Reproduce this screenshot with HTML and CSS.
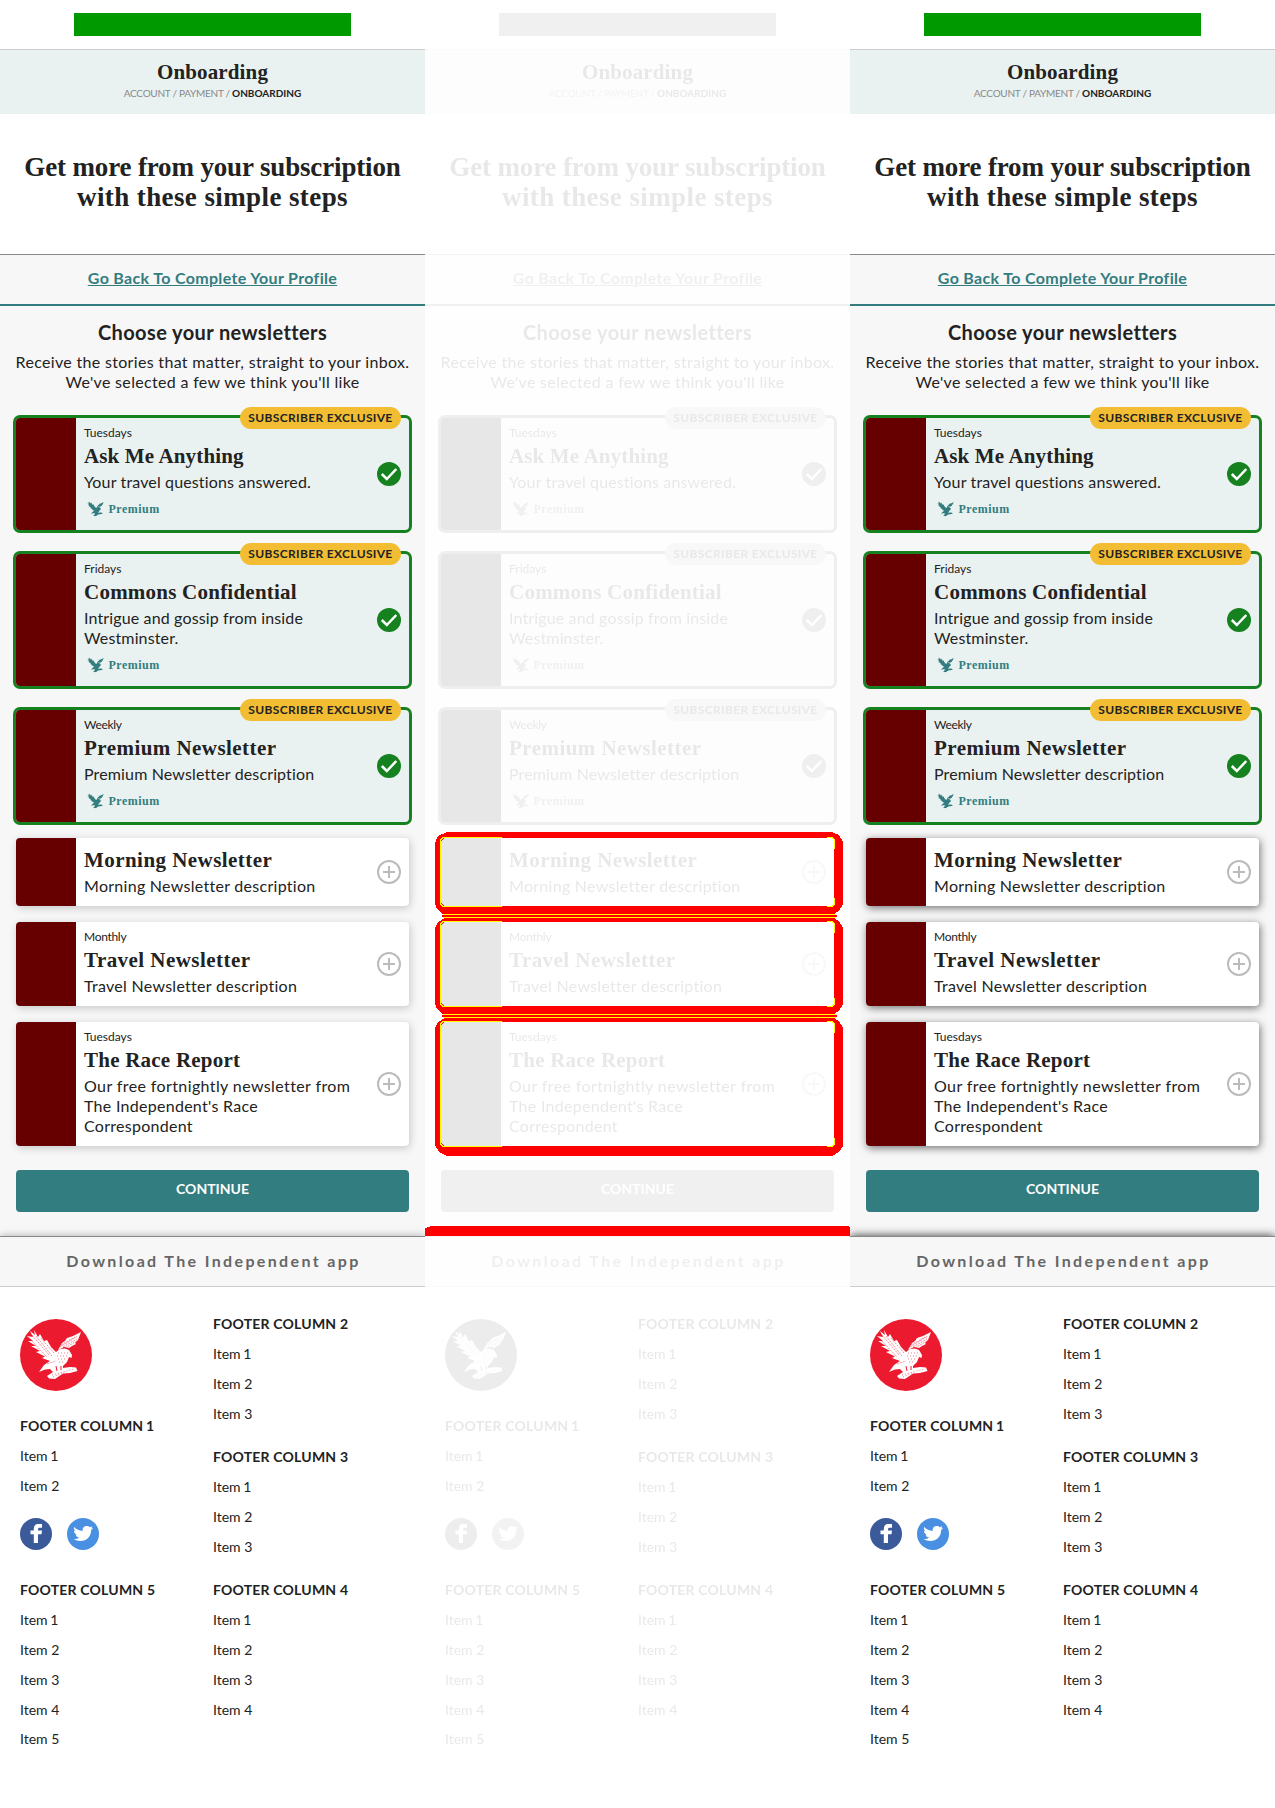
FILE: index.html
```html
<!DOCTYPE html>
<html lang="en">
<head>
<meta charset="utf-8">
<title>Onboarding – visual comparison</title>
<link rel="stylesheet" href="styles.css">
</head>
<body>
<svg width="0" height="0" class="defs">
  <symbol id="eagle" viewBox="6 10 56 51">
    <path d="M14 11L18 18L20 15L24 22L27 21L31 28L36 33L40 30L45 29.500L49 31L52 36L51.500 39L49 38L47 43L43 47L43 49L50 48L56 48.500L57.500 52L50 54L43 54.500L35 60L29 59.500L27 57L33 53L30 50L25 50.500L19 53L24 46L30 42L22 39L25 37.500L16 33L20 32L11 27L16 27L8 22L13 22L7 17L13 18L10 12L15 16Z"/>
    <path d="M61 13L58 21L55 24L56 25L52 27L49 29L44 28L38 31L42 24L45 22L47 19L53 17Z"/>
  </symbol>
</svg>

<template id="page">
  <div class="ad-row"><div class="ad"></div></div>
  <header class="steps">
    <h1 class="steps-title">Onboarding</h1>
    <div class="crumbs"><span class="crumbs-past">ACCOUNT / PAYMENT / </span><b>ONBOARDING</b></div>
  </header>
  <h2 class="hero"><span class="hero-first">Get more from your subscription</span><br><span class="hero-second">with these simple steps</span></h2>
  <div class="back"><a>Go Back To Complete Your Profile</a></div>
  <main class="newsletters">
    <h3 class="choose">Choose your newsletters</h3>
    <p class="intro">Receive the stories that matter, straight to your inbox.<br>We've selected a few we think you'll like</p>

    <article class="card selected">
      <div class="thumb"></div>
      <div class="body">
        <div class="freq">Tuesdays</div>
        <h4 class="title tight">Ask Me Anything</h4>
        <p class="desc tight">Your travel questions answered.</p>
        <div class="premium"><svg class="bird"><use href="#eagle"/></svg>Premium</div>
      </div>
      <svg class="toggle" viewBox="0 0 24 24"><circle cx="12" cy="12" r="12" fill="#15811f"/><path d="M4.800 12L9.800 17L19.300 7" fill="none" stroke="#fff" stroke-width="2.500"/></svg>
      <span class="pill">SUBSCRIBER EXCLUSIVE</span>
    </article>

    <article class="card selected">
      <div class="thumb"></div>
      <div class="body">
        <div class="freq">Fridays</div>
        <h4 class="title mid">Commons Confidential</h4>
        <p class="desc tight">Intrigue and gossip from inside<br>Westminster.</p>
        <div class="premium"><svg class="bird"><use href="#eagle"/></svg>Premium</div>
      </div>
      <svg class="toggle" viewBox="0 0 24 24"><circle cx="12" cy="12" r="12" fill="#15811f"/><path d="M4.800 12L9.800 17L19.300 7" fill="none" stroke="#fff" stroke-width="2.500"/></svg>
      <span class="pill">SUBSCRIBER EXCLUSIVE</span>
    </article>

    <article class="card selected">
      <div class="thumb"></div>
      <div class="body">
        <div class="freq narrow">Weekly</div>
        <h4 class="title">Premium Newsletter</h4>
        <p class="desc tight">Premium Newsletter description</p>
        <div class="premium"><svg class="bird"><use href="#eagle"/></svg>Premium</div>
      </div>
      <svg class="toggle" viewBox="0 0 24 24"><circle cx="12" cy="12" r="12" fill="#15811f"/><path d="M4.800 12L9.800 17L19.300 7" fill="none" stroke="#fff" stroke-width="2.500"/></svg>
      <span class="pill">SUBSCRIBER EXCLUSIVE</span>
    </article>

    <article class="card">
      <div class="thumb"></div>
      <div class="body">
        <h4 class="title">Morning Newsletter</h4>
        <p class="desc">Morning Newsletter description</p>
      </div>
      <svg class="toggle" viewBox="0 0 24 24"><g fill="none" stroke="#bbb" stroke-width="2"><circle cx="12" cy="12" r="11"/><path d="M6 12H18M12 6V18"/></g></svg>
    </article>

    <article class="card">
      <div class="thumb"></div>
      <div class="body">
        <div class="freq narrow">Monthly</div>
        <h4 class="title">Travel Newsletter</h4>
        <p class="desc">Travel Newsletter description</p>
      </div>
      <svg class="toggle" viewBox="0 0 24 24"><g fill="none" stroke="#bbb" stroke-width="2"><circle cx="12" cy="12" r="11"/><path d="M6 12H18M12 6V18"/></g></svg>
    </article>

    <article class="card">
      <div class="thumb"></div>
      <div class="body">
        <div class="freq">Tuesdays</div>
        <h4 class="title mid">The Race Report</h4>
        <p class="desc"><span class="wide">Our free fortnightly newsletter from</span><br>The Independent's Race<br>Correspondent</p>
      </div>
      <svg class="toggle" viewBox="0 0 24 24"><g fill="none" stroke="#bbb" stroke-width="2"><circle cx="12" cy="12" r="11"/><path d="M6 12H18M12 6V18"/></g></svg>
    </article>

    <button class="continue">CONTINUE</button>
  </main>
  <div class="download">Download The Independent app</div>
  <footer class="footer">
    <div class="column">
      <svg class="logo" viewBox="0 0 72 72">
        <circle cx="36" cy="36" r="36" fill="#ec1a2e"/>
        <use href="#eagle" x="6" y="10" width="56" height="51" fill="#fff"/>
        <path d="M12 16L29 36M10 20L27 38M16 17L32 37M21 19L34 34M27 45L36 42M40 28L58 17M43 28L57 20M41 26L55 18M45 29L57 22" stroke="#ec1a2e" stroke-width=".5" stroke-dasharray="2 1" fill="none"/>
        <path d="M38 34H49M37 37H48M38 40H47M39 43H45M32 56L54 50M33 58L44 53" stroke="#ec1a2e" stroke-width=".6" stroke-dasharray="1 2" fill="none"/>
        <path d="M36 47L37 52M41 47V51" stroke="#ec1a2e" stroke-width="1"/>
      </svg>
      <section class="links">
        <h5>FOOTER COLUMN <i class="one">1</i></h5>
        <ul><li>Item <i class="one">1</i></li><li>Item 2</li></ul>
      </section>
      <div class="social">
        <svg viewBox="0 0 32 32"><circle cx="16" cy="16" r="16" fill="#3b5a9a"/><path d="M13.800 25V16.300H10.500V12.600H13.800V11C13.800 7.600 15.500 6 18.500 6H22V9.700H20C18.500 9.700 18 10.300 18 11.500V12.600H22L21.500 16.300H18V25Z" fill="#fff"/></svg>
        <svg viewBox="0 0 32 32"><circle cx="16" cy="16" r="16" fill="#4a90e2"/><path d="M7.300 9C9.500 11.500 12.500 12.700 15.700 13C15.200 10.200 17 8 19.700 8C21 8 22 8.500 22.800 9.300L25.400 8.300C25.200 9.200 24.600 9.900 23.900 10.400L26 9.900C25.500 10.700 24.900 11.400 24.100 12C24.300 18.500 19.500 23 13.500 23C11 23 8.600 22.300 6.600 21C8.800 21.200 10.600 20.600 12.200 19.500C10.400 19.300 9.100 18.200 8.600 16.700H10.200C8.300 16.200 7 14.700 7 12.700L8.700 13.200C7.100 12 6.300 10.500 7.300 9Z" fill="#fff"/></svg>
      </div>
      <section class="links fifth">
        <h5>FOOTER COLUMN 5</h5>
        <ul><li>Item <i class="one">1</i></li><li>Item 2</li><li>Item 3</li><li>Item 4</li><li class="last">Item 5</li></ul>
      </section>
    </div>
    <div class="column">
      <section class="links"><h5>FOOTER COLUMN 2</h5><ul><li>Item <i class="one">1</i></li><li>Item 2</li><li>Item 3</li></ul></section>
      <section class="links"><h5>FOOTER COLUMN 3</h5><ul><li>Item <i class="one">1</i></li><li>Item 2</li><li>Item 3</li></ul></section>
      <section class="links"><h5>FOOTER COLUMN 4</h5><ul><li>Item <i class="one">1</i></li><li>Item 2</li><li>Item 3</li><li>Item 4</li></ul></section>
    </div>
  </footer>
</template>

<div class="comparison">
  <div class="panel"><div class="screen before"></div></div>
  <div class="panel">
    <div class="screen faded"></div>
    <svg class="marks" viewBox="0 0 425 1808" shape-rendering="crispEdges">
      <g fill="#f00" fill-rule="evenodd">
        <path d="M22 832H407L414 835L418 842V904L414 911L409 914H18L12 909L10 903V843L13 836ZM19 838L16 841V903L19 906H406L409 903V841L406 838Z"/>
        <path d="M20 918H409L414 921L418 928V1004L414 1011L409 1014H18L12 1009L10 1003V928L13 922ZM19 922L16 925V1003L19 1006H406L409 1003V925L406 922Z"/>
        <path d="M20 1018H409L414 1021L418 1028V1146L414 1152L407 1156H22L14 1152L10 1145V1028L13 1022ZM19 1022L16 1025V1143L19 1146H406L409 1143V1025L406 1022Z"/>
        <path d="M17 915H412V917H17ZM17 1015H412V1017H17ZM6 1226H423L425 1227V1236H0V1228Z"/>
      </g>
      <g fill="none" stroke="#ff0">
        <path d="M77 837.500H18L15.500 840V904L18 906.500H77M402 837.500H407L409.500 840V849M402 906.500H407L409.500 904V898"/>
        <path d="M77 921.500H18L15.500 924V1004L18 1006.500H77M402 921.500H407L409.500 924V933M402 1006.500H407L409.500 1004V998"/>
        <path d="M77 1021.500H18L15.500 1024V1144L18 1146.500H77M402 1021.500H407L409.500 1024V1033M402 1146.500H407L409.500 1144V1138"/>
        <path d="M18 914.500H411M18 917.500H411M18 1014.500H411M18 1017.500H411"/>
      </g>
    </svg>
  </div>
  <div class="panel"><div class="screen after"></div></div>
</div>
<script src="script.js"></script>
</body>
</html>
```
FILE: styles.css
```css
* { box-sizing: border-box; }
body { margin: 0; background: #fff; color: #222; font-family: Lato, sans-serif; }
h1, h2, h3, h4, h5, p, ul { margin: 0; padding: 0; }
ul { list-style: none; }
i { font-style: normal; }
.defs { position: absolute; }

.comparison { display: flex; width: 1275px; height: 1808px; overflow: hidden; }
.panel { position: relative; width: 425px; height: 1808px; overflow: hidden; background: #fff; }
.screen { height: 1808px; background: #fff; white-space: nowrap; }
.faded { filter: grayscale(1) opacity(.105); }
.marks { position: absolute; inset: 0; width: 425px; height: 1808px; }

.ad-row { height: 50px; padding-top: 13px; border-bottom: 1px solid #ccc; }
.ad { width: 277px; height: 23px; margin: 0 auto; background: #009900; }

.steps { height: 64px; padding-top: 9px; background: #eaf2f1; text-align: center; }
.steps-title { font: 700 21px/26px "Liberation Serif", serif; letter-spacing: .14px; }
.crumbs { margin-top: 1px; font-size: 10px; line-height: 14px; }
.crumbs-past { color: #888; letter-spacing: -.27px; white-space: pre; }

.hero { height: 140px; padding-top: 38px; font: 700 27px/30px "Liberation Serif", serif; text-align: center; }
.hero-first { letter-spacing: -.15px; }
.hero-second { letter-spacing: .4px; }

.back { height: 52px; padding-top: 13px; border-top: 1px solid #888; border-bottom: 2px solid #327d80; background: #f7f7f7; text-align: center; font-size: 16px; font-weight: 700; line-height: 20px; letter-spacing: .33px; }
.back a { color: #327d80; text-decoration: underline; text-decoration-thickness: 1px; text-underline-offset: 1px; }

.newsletters { display: flex; flex-direction: column; gap: 16px; height: 930px; padding: 13px 16px 24px; background: #f7f7f7; }
.choose { font-size: 20px; line-height: 26px; letter-spacing: .4px; text-align: center; }
.intro { margin: -9px -10px 10px; font-size: 16px; line-height: 20px; letter-spacing: .32px; text-align: center; }

.card { position: relative; display: flex; align-items: center; flex: none; padding-right: 8px; border-radius: 4px; background: #fff; box-shadow: 1px 2px 8px rgba(0, 0, 0, .2); }
.after .card { box-shadow: 1px 2px 8px rgba(0, 0, 0, .55); }
.screen .selected { background: #eaf2f1; box-shadow: 0 0 0 3px #15811f; }
.selected + .selected { margin-top: 8px; }
.thumb { align-self: stretch; width: 60px; border-radius: 4px 0 0 4px; background: #600; }
.body { flex: 1; padding: 9px 0 10px 8px; }
.freq { height: 13px; margin: -1px 0 4px; font-size: 12px; line-height: 13px; }
.freq.narrow { letter-spacing: -.3px; }
.title { margin-bottom: 3px; font: 700 21px/26px "Liberation Serif", serif; letter-spacing: .45px; }
.title.mid { letter-spacing: .23px; }
.title.tight { letter-spacing: .14px; }
.desc { font-size: 16px; line-height: 20px; letter-spacing: .28px; }
.desc.tight { letter-spacing: .14px; }
.wide { letter-spacing: .39px; }
.premium { display: flex; gap: 4.500px; height: 21px; margin-top: 7px; padding-left: 3px; color: #327d80; font: 700 12px/20px "Liberation Serif", serif; letter-spacing: .5px; }
.bird { width: 17px; height: 15.500px; margin-top: 2px; fill: #327d80; }
.toggle { flex: none; width: 24px; height: 24px; }
.pill { position: absolute; top: -11px; right: 8px; width: 161px; height: 22px; border-radius: 11px; background: #f2bd32; font-size: 12px; font-weight: 700; line-height: 22px; letter-spacing: .34px; text-align: center; }

.continue { height: 42px; margin-top: 8px; padding: 0 0 5px; border: 0; border-radius: 4px; background: #327d80; color: #fff; font: 700 14px/37px Lato, sans-serif; }
.download { height: 51px; border-top: 1px solid #888; border-bottom: 1px solid #ccc; background: #f7f7f7; box-shadow: 0 0 8px rgba(0, 0, 0, .3); color: #666; font-size: 16px; font-weight: 700; line-height: 48px; letter-spacing: 2.360px; text-indent: 2px; text-align: center; }
.after .download { box-shadow: 0 0 9px rgba(0, 0, 0, .8); }

.footer { position: relative; display: grid; grid-template-columns: 193px 1fr; height: 521px; padding: 22px 20px 0; background: #fff; font-size: 14px; line-height: 30px; }
.column { display: flex; flex-direction: column; gap: 13px; }
.logo { width: 72px; height: 72px; margin: 10px 0 7px; }
.links h5 { font-size: 14px; letter-spacing: .2px; }
.links li { letter-spacing: 0; }
.one { margin-left: -1px; }
.social { display: flex; gap: 15px; margin-top: 4px; }
.social svg { width: 32px; height: 32px; }
.fifth { margin-top: 12px; }
.last { margin-top: -1px; }
```
FILE: script.js
```js
const page = document.getElementById("page");
document.querySelectorAll(".screen").forEach(screen => {
  screen.append(page.content.cloneNode(true));
});
```
